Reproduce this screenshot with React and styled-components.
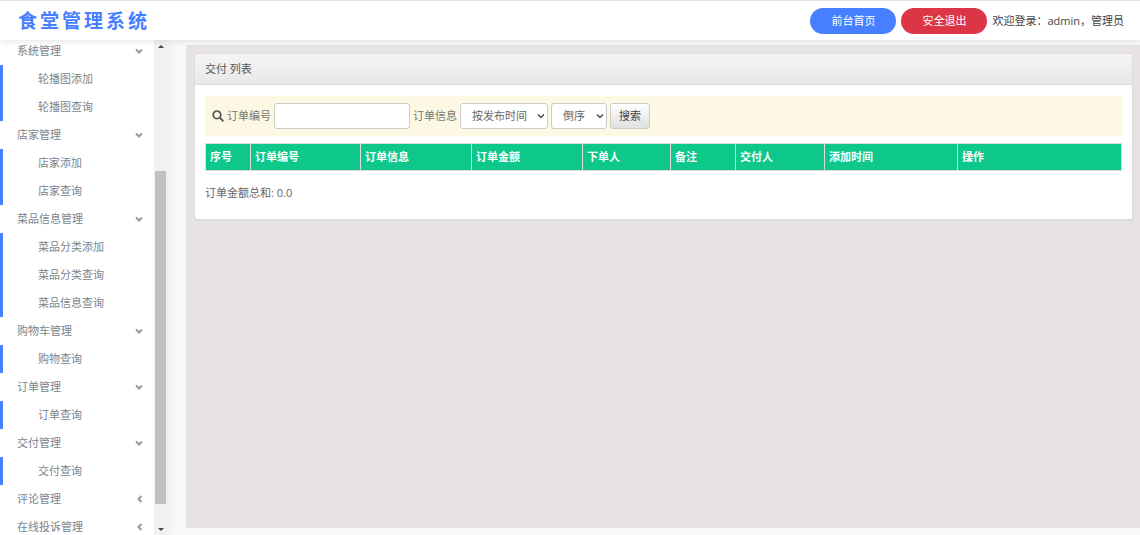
import React, { useState } from "react";
import styled, { createGlobalStyle } from "styled-components";

const GlobalStyle = createGlobalStyle`
  * {
    box-sizing: border-box;
  }
  body {
    margin: 0;
    background: #f8f9fb;
    color: #666;
    font-family: "Open Sans", "Noto Sans CJK SC", sans-serif;
    font-size: 11px;
    line-height: 16px;
  }
  button,
  input,
  select {
    font: inherit;
  }
`;

const Page = styled.div`
  display: flex;
  flex-direction: column;
  height: 100vh;
  overflow: hidden;
`;

const Header = styled.header`
  display: flex;
  align-items: center;
  justify-content: space-between;
  flex: none;
  height: 40px;
  padding: 0 16px 0 18px;
  background: #fff;
  border-top: 1px solid #e2e2e2;
  box-shadow: 0 0 8px rgba(0, 0, 0, 0.14);
  z-index: 1;
`;

const Brand = styled.h1`
  margin: 0;
  color: #467fff;
  font-size: 19px;
  line-height: 28px;
  font-weight: 700;
  letter-spacing: 3px;
`;

const HeaderActions = styled.div`
  display: flex;
  align-items: center;
  gap: 5px;
  color: #444;
`;

const PillLink = styled.a`
  padding: 5px 21px;
  border-radius: 14px;
  background: ${({ $danger }) => ($danger ? "#dc3545" : "#467fff")};
  color: #fff;
  text-decoration: none;
`;

const Body = styled.div`
  display: flex;
  flex: 1;
  min-height: 0;
`;

const Sidebar = styled.aside`
  display: flex;
  flex: none;
  width: 167px;
  background: #fff;
  box-shadow: 0 0 12px rgba(0, 0, 0, 0.08);
`;

const Menu = styled.nav`
  flex: 1;
  overflow: hidden;
`;

const MenuGroups = styled.ul`
  margin: -3px 0 0;
  padding: 0;
  list-style: none;
`;

const GroupButton = styled.button`
  display: flex;
  align-items: center;
  justify-content: space-between;
  width: 100%;
  height: 28px;
  padding: 0 10px 0 17px;
  border: 0;
  background: none;
  color: #7a848d;
  cursor: pointer;

  svg {
    fill: none;
    stroke: #999;
    stroke-width: 2;
  }
`;

const SubMenu = styled.ul`
  margin: 0;
  padding: 0;
  list-style: none;
  border-left: 3px solid #467fff;
`;

const SubLink = styled.a`
  display: block;
  padding: 6px 0 6px 35px;
  color: #7a848d;
  text-decoration: none;
`;

const ScrollBar = styled.div`
  display: flex;
  flex-direction: column;
  justify-content: space-between;
  align-items: center;
  flex: none;
  width: 13px;
  padding: 5px 0 4px;
  background: #f1f1f1;

  svg {
    fill: #444;
  }
`;

const ScrollTrack = styled.div`
  display: flex;
  flex-direction: column;
  justify-content: flex-end;
  flex: 1;
  align-self: stretch;
  padding: 0 1px 24px;
`;

const ScrollThumb = styled.div`
  height: 73%;
  background: #c1c1c1;
`;

const Content = styled.main`
  flex: 1;
  min-width: 0;
  margin: 5px 0 7px 19px;
  padding: 8px 7px 8px 8px;
  background: #e8e3e3;
`;

const Panel = styled.section`
  background: #fff;
  border: 1px solid #ddd;
  border-radius: 3px;
  box-shadow: 0 1px 1px rgba(0, 0, 0, 0.05);
`;

const PanelHeading = styled.h2`
  margin: 0;
  padding: 7px 10px;
  background: linear-gradient(#f5f5f5, #e8e8e8);
  border-bottom: 1px solid #ddd;
  color: #555;
  font-size: 11px;
  line-height: 16px;
  font-weight: 400;
`;

const PanelBody = styled.div`
  padding: 11px 10px 18px;
`;

const SearchForm = styled.form`
  display: flex;
  align-items: center;
  gap: 3px;
  margin-bottom: 7px;
  padding: 7px;
  background: #fcf8e3;
  color: #777;

  label {
    display: flex;
    align-items: center;
    gap: 3px;
  }
`;

const field = `
  height: 26px;
  border: 1px solid #ccc;
  border-radius: 3px;
  background: #fff;
  color: #666;
`;

const TextInput = styled.input`
  ${field}
  width: 136px;
  padding: 0 8px;
`;

const SelectBox = styled.span`
  display: grid;
  align-items: center;

  select {
    ${field}
    grid-area: 1 / 1;
    appearance: none;
    padding: 0 16px 0 11px;
    width: ${({ $wide }) => ($wide ? "88px" : "56px")};
  }
  svg {
    grid-area: 1 / 1;
    justify-self: end;
    margin-right: 3px;
    fill: none;
    stroke: #444;
    stroke-width: 1.3;
    pointer-events: none;
  }
`;

const SearchButton = styled.button`
  height: 26px;
  padding: 0 8px;
  border: 1px solid #ccc;
  border-radius: 3px;
  background: linear-gradient(#fff, #e0e0e0);
  color: #444;
`;

const OrderTable = styled.table`
  width: 100%;
  table-layout: fixed;
  border-collapse: collapse;

  th {
    padding: 5px 4px;
    border: 1px solid #ddd;
    background: #0dc88a;
    color: #fff;
    font-weight: 700;
    text-align: left;
  }
`;

const Total = styled.p`
  margin: 14px 0 0;
`;

const menu = [
  { title: "系统管理", items: ["轮播图添加", "轮播图查询"] },
  { title: "店家管理", items: ["店家添加", "店家查询"] },
  { title: "菜品信息管理", items: ["菜品分类添加", "菜品分类查询", "菜品信息查询"] },
  { title: "购物车管理", items: ["购物查询"] },
  { title: "订单管理", items: ["订单查询"] },
  { title: "交付管理", items: ["交付查询"] },
  { title: "评论管理", items: ["评论查询"], closed: true },
  { title: "在线投诉管理", items: ["在线投诉查询"], closed: true },
];

const columns = [
  { title: "序号", width: 45 },
  { title: "订单编号", width: 110 },
  { title: "订单信息", width: 111 },
  { title: "订单金额", width: 111 },
  { title: "下单人", width: 88 },
  { title: "备注", width: 65 },
  { title: "交付人", width: 89 },
  { title: "添加时间", width: 133 },
  { title: "操作", width: 164 },
];

const MenuGroup = ({ title, items, closed }) => {
  const [open, setOpen] = useState(!closed);

  return (
    <li>
      <GroupButton type="button" aria-expanded={open} onClick={() => setOpen(!open)}>
        {title}
        <svg width="10" height="10" viewBox="0 0 10 10">
          <path d={open ? "M2 3.5 5 6.5 8 3.5" : "M7.5 2 4.5 5 7.5 8"} />
        </svg>
      </GroupButton>
      {open && (
        <SubMenu>
          {items.map((item) => (
            <li key={item}>
              <SubLink href="#">{item}</SubLink>
            </li>
          ))}
        </SubMenu>
      )}
    </li>
  );
};

const Select = ({ options, label, wide }) => (
  <SelectBox $wide={wide}>
    <select aria-label={label}>
      {options.map((option) => (
        <option key={option}>{option}</option>
      ))}
    </select>
    <svg width="8" height="8" viewBox="0 0 8 8">
      <path d="M1 2.5 4 5.5 7 2.5" />
    </svg>
  </SelectBox>
);

const App = () => (
  <Page>
    <GlobalStyle />
    <Header>
      <Brand>食堂管理系统</Brand>
      <HeaderActions>
        <PillLink href="#">前台首页</PillLink>
        <PillLink href="#" $danger>
          安全退出
        </PillLink>
        <span>欢迎登录：admin，管理员</span>
      </HeaderActions>
    </Header>
    <Body>
      <Sidebar>
        <Menu>
          <MenuGroups>
            {menu.map((group) => (
              <MenuGroup key={group.title} {...group} />
            ))}
          </MenuGroups>
        </Menu>
        <ScrollBar aria-hidden="true">
          <svg width="6" height="3" viewBox="0 0 6 3">
            <path d="M0 3 3 0 6 3Z" />
          </svg>
          <ScrollTrack>
            <ScrollThumb />
          </ScrollTrack>
          <svg width="6" height="3" viewBox="0 0 6 3">
            <path d="M0 0 3 3 6 0Z" />
          </svg>
        </ScrollBar>
      </Sidebar>
      <Content>
        <Panel>
          <PanelHeading>交付 列表</PanelHeading>
          <PanelBody>
            <SearchForm onSubmit={(e) => e.preventDefault()}>
              <label htmlFor="orderNo">
                <svg width="12" height="12" viewBox="0 0 12 12" fill="none" stroke="#555" strokeWidth="1.7">
                  <circle cx="5" cy="4.8" r="3.8" />
                  <path d="M7.8 7.6 11.4 11.2" strokeWidth="2" />
                </svg>
                订单编号
              </label>
              <TextInput type="text" id="orderNo" name="orderNo" />
              <span>订单信息</span>
              <Select wide label="排序字段" options={["按发布时间"]} />
              <Select label="排序方式" options={["倒序", "升序"]} />
              <SearchButton type="submit">搜索</SearchButton>
            </SearchForm>
            <OrderTable>
              <colgroup>
                {columns.map(({ title, width }) => (
                  <col key={title} width={width} />
                ))}
              </colgroup>
              <thead>
                <tr>
                  {columns.map(({ title }) => (
                    <th key={title}>{title}</th>
                  ))}
                </tr>
              </thead>
            </OrderTable>
            <Total>订单金额总和: 0.0</Total>
          </PanelBody>
        </Panel>
      </Content>
    </Body>
  </Page>
);

export default App;
